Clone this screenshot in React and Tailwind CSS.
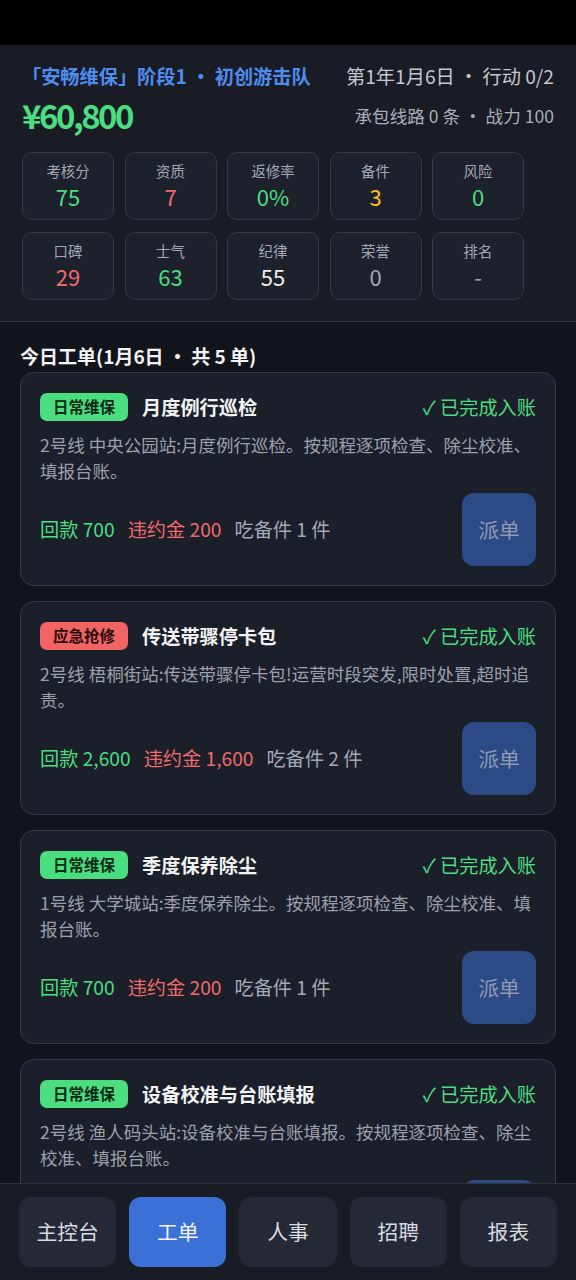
const stats = [
  { label: '考核分', value: '75', color: 'text-[#4ade80]' },
  { label: '资质', value: '7', color: 'text-[#f06a6a]' },
  { label: '返修率', value: '0%', color: 'text-[#4ade80]' },
  { label: '备件', value: '3', color: 'text-[#fbbf24]' },
  { label: '风险', value: '0', color: 'text-[#4ade80]' },
  { label: '口碑', value: '29', color: 'text-[#f06a6a]' },
  { label: '士气', value: '63', color: 'text-[#4ade80]' },
  { label: '纪律', value: '55', color: 'text-[#eef0f4]' },
  { label: '荣誉', value: '0', color: 'text-[#a3a9b4]' },
  { label: '排名', value: '-', color: 'text-[#a3a9b4]' },
]

const orders = [
  {
    kind: 'daily',
    tag: '日常维保',
    title: '月度例行巡检',
    desc: '2号线 中央公园站:月度例行巡检。按规程逐项检查、除尘校准、填报台账。',
    pay: '700',
    fine: '200',
    parts: 1,
  },
  {
    kind: 'urgent',
    tag: '应急抢修',
    title: '传送带骤停卡包',
    desc: '2号线 梧桐街站:传送带骤停卡包!运营时段突发,限时处置,超时追责。',
    pay: '2,600',
    fine: '1,600',
    parts: 2,
  },
  {
    kind: 'daily',
    tag: '日常维保',
    title: '季度保养除尘',
    desc: '1号线 大学城站:季度保养除尘。按规程逐项检查、除尘校准、填报台账。',
    pay: '700',
    fine: '200',
    parts: 1,
  },
  {
    kind: 'daily',
    tag: '日常维保',
    title: '设备校准与台账填报',
    desc: '2号线 渔人码头站:设备校准与台账填报。按规程逐项检查、除尘校准、填报台账。',
    pay: '700',
    fine: '200',
    parts: 1,
  },
  {
    kind: 'daily',
    tag: '日常维保',
    title: '月度例行巡检',
    desc: '1号线 江滨路站:月度例行巡检。按规程逐项检查、除尘校准、填报台账。',
    pay: '700',
    fine: '200',
    parts: 1,
  },
]

const tabs = ['主控台', '工单', '人事', '招聘', '报表']

const OrderCard = ({ order }) => {
  const urgent = order.kind === 'urgent'
  return (
    <div className="bg-[#1b1f29] border border-[#343a46] rounded-[14px] px-[19px] pt-5 pb-[19px]">
      {/* Head */}
      <div className="flex items-center h-[28px]">
        <span
          className={`h-[28px] px-[13px] flex items-center rounded-[7px] text-[15.5px] font-bold ${
            urgent ? 'bg-[#f26464] text-[#2a0b0b]' : 'bg-[#4ade80] text-[#0b2a16]'
          }`}
        >
          {order.tag}
        </span>
        <h3 className="ml-[14px] text-[19.2px] font-bold text-[#f1f3f6]">{order.title}</h3>
        <span className="ml-auto text-[19.2px] text-[#4ade80]">✓ 已完成入账</span>
      </div>

      {/* Description */}
      <p className="mt-[11px] text-[17.5px] leading-[26px] text-[#9ba1ac]">{order.desc}</p>

      {/* Footer */}
      <div className="mt-[9px] flex items-center">
        <div className="flex items-center gap-[13px] text-[19.2px]">
          <span className="text-[#4ade80]">回款 {order.pay}</span>
          <span className="text-[#f06a6a]">违约金 {order.fine}</span>
          <span className="text-[#a3a9b4]">吃备件 {order.parts} 件</span>
        </div>
        <button className="ml-auto w-[74px] h-[73px] rounded-[12px] bg-[#2b4a86] text-[20.8px] text-[#8f9bb0]">
          派单
        </button>
      </div>
    </div>
  )
}

export default function App() {
  return (
    <div
      className="h-screen flex flex-col bg-[#11141b] overflow-hidden"
      style={{ fontFamily: '"Noto Sans CJK SC", "Noto Sans", sans-serif' }}
    >
      {/* Status bar */}
      <div className="h-[45px] bg-black shrink-0" />

      {/* Header */}
      <header className="shrink-0 bg-[#191c25] border-b border-[#2d323c] px-[22px] pt-[17px] pb-[21px]">
        <div className="flex items-center justify-between h-[28px]">
          <span className="text-[19.2px] font-bold text-[#4f8cf0]">「安畅维保」阶段1 · 初创游击队</span>
          <span className="text-[19.2px] text-[#c3c7cf]">第1年1月6日 · 行动 0/2</span>
        </div>
        <div className="mt-[6px] flex items-center justify-between h-[40px]">
          <span className="text-[33px] font-bold text-[#4ade80] tracking-[-2.5px]">¥60,800</span>
          <span className="text-[17.6px] text-[#a9aeb8]">承包线路 0 条 · 战力 100</span>
        </div>

        {/* Stats */}
        <div className="mt-[16px] grid grid-cols-[repeat(5,92px)] gap-x-[10.5px] gap-y-[12px]">
          {stats.map((s) => (
            <div
              key={s.label}
              className="h-[68px] bg-[#1d212b] border border-[#343a46] rounded-[10px] flex flex-col items-center justify-center"
            >
              <span className="text-[14.4px] leading-[20px] text-[#a3a9b4]">{s.label}</span>
              <span className={`text-[22px] leading-[30px] ${s.color}`}>{s.value}</span>
            </div>
          ))}
        </div>
      </header>

      {/* Order list */}
      <main className="flex-1 overflow-hidden px-5 pt-[20px]">
        <h2 className="text-[19px] leading-[28px] font-bold text-[#f1f3f6]">今日工单(1月6日 · 共 5 单)</h2>
        <div className="mt-[2px] flex flex-col gap-[15px]">
          {orders.map((o, i) => (
            <OrderCard key={i} order={o} />
          ))}
        </div>
      </main>

      {/* Bottom nav */}
      <nav className="shrink-0 bg-[#191c25] border-t border-[#2d323c] px-[19px] py-[13px] grid grid-cols-5 gap-[13px]">
        {tabs.map((t) => (
          <button
            key={t}
            className={`h-[70px] rounded-[12px] text-[20.8px] ${
              t === '工单' ? 'bg-[#3b70d6] text-[#f3f5f9]' : 'bg-[#242935] text-[#d6dae1]'
            }`}
          >
            {t}
          </button>
        ))}
      </nav>
    </div>
  )
}
